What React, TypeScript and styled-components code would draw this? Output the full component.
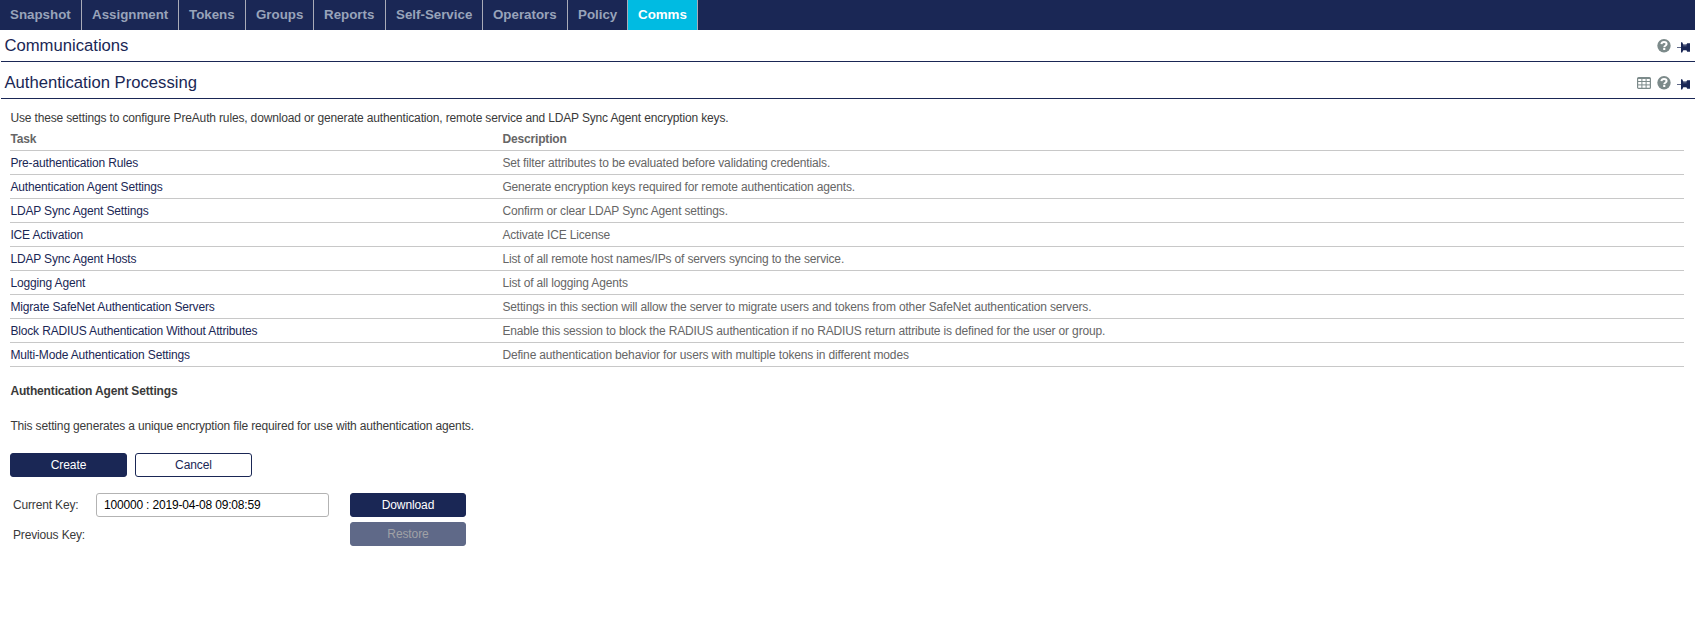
import React from "react";
import styled, { createGlobalStyle } from "styled-components";

const navy = "#1a2755";

const GlobalStyle = createGlobalStyle`
  * { box-sizing: border-box; }
  body {
    margin: 0;
    background: #fff;
    color: #3a3a3a;
    font: 12px/16px "Liberation Sans", Arial, sans-serif;
  }
`;

const NavBar = styled.nav`
  display: flex;
  height: 30px;
  background: ${navy};
`;

const Tab = styled.a<{ $width: number; $active?: boolean }>`
  flex: none;
  width: ${(p) => p.$width}px;
  padding-left: 10px;
  border-right: 1px solid #a9abb8;
  background: ${(p) => (p.$active ? "#00bbe2" : "transparent")};
  color: ${(p) => (p.$active ? "#fff" : "#98a3ba")};
  font-size: 13.33px;
  font-weight: bold;
  line-height: 29px;
  white-space: nowrap;
`;

const SectionHeader = styled.header<{ $height: number }>`
  display: flex;
  justify-content: space-between;
  align-items: flex-end;
  height: ${(p) => p.$height}px;
  margin-left: 1px;
  padding: 0 5px 4px 3.4px;
  border-bottom: 1px solid ${navy};
`;

const SectionTitle = styled.h1`
  margin: 0;
  color: ${navy};
  font-size: 16.67px;
  font-weight: normal;
  line-height: 22px;
`;

const Tools = styled.div`
  display: flex;
  align-items: center;
  gap: 6px;
  height: 22px;
  svg { display: block; }
`;

const Content = styled.main`
  padding: 11px 11px 0 10px;
  letter-spacing: -0.154px;
`;

const Intro = styled.p`
  margin: 0;
  padding-left: 0.4px;
  line-height: 16px;
`;

const Table = styled.div`
  display: flex;
  flex-direction: column;
  margin-top: 1px;
`;

const Row = styled.div<{ $head?: boolean }>`
  display: grid;
  grid-template-columns: 492px 1fr;
  height: 24px;
  padding-left: 0.4px;
  border-bottom: 1px solid #c8c8c8;
  color: #666;
  font-weight: ${(p) => (p.$head ? "bold" : "normal")};
  line-height: 24px;
`;

const TaskLink = styled.a`
  color: ${navy};
`;

const SubTitle = styled.h2`
  margin: 16px 0 0;
  padding-left: 0.4px;
  font-size: 12px;
  line-height: 16px;
`;

const Note = styled.p`
  margin: 19px 0 0;
  padding-left: 0.4px;
`;

const Actions = styled.div`
  display: flex;
  gap: 8px;
  margin-top: 19px;
`;

const Button = styled.button<{ $variant?: "outline" | "disabled" }>`
  width: 117px;
  height: 24px;
  padding: 0;
  border: 1px solid ${(p) => (p.$variant === "disabled" ? "#5f6988" : navy)};
  border-radius: 3px;
  background: ${(p) =>
    p.$variant === "outline" ? "#fff" : p.$variant === "disabled" ? "#5f6988" : navy};
  color: ${(p) =>
    p.$variant === "outline" ? navy : p.$variant === "disabled" ? "#a0a1a6" : "#fff"};
  font: 12px/22px "Liberation Sans", Arial, sans-serif;
  letter-spacing: -0.1px;
`;

const Keys = styled.div`
  display: grid;
  grid-template-columns: 83px 233px 137px;
  row-gap: 5px;
  padding-left: 3px;
  margin-top: 16px;
  line-height: 24px;
`;

const KeyInput = styled.input`
  width: 233px;
  height: 24px;
  padding: 0 7px;
  border: 1px solid #b3b3b3;
  border-radius: 3px;
  background: #fff;
  color: #000;
  font: 12px "Liberation Sans", Arial, sans-serif;
  letter-spacing: -0.18px;
`;

const KeyButton = styled(Button)`
  width: 116px;
  margin-left: 21px;
`;

const PreviousLabel = styled.span`
  grid-column: 1 / 3;
  padding-top: 1px;
`;

const HelpIcon = () => (
  <svg width="14" height="14" viewBox="0 0 14 14">
    <circle cx="7" cy="6.8" r="6.7" fill="#7c8a8a" />
    <path d="M4.4 5.2C4.6 3.7 5.6 3 7 3c1.6 0 2.6.8 2.6 2.1 0 1.7-2.3 1.6-2.3 3.1" fill="none" stroke="#fff" strokeWidth="2" />
    <path d="M6.2 9h2.1v2H6.2z" fill="#fff" />
  </svg>
);

const PinIcon = () => (
  <svg width="13" height="11" viewBox="0 0 13 11">
    <path d="M0 5h4v1H0z" fill="#5f6988" />
    <path d="M4 .2h1.2L6.3 2.5H9.4L10.2 1.2H13v8.5h-2.8L9.4 8.3H6.3L5.2 10.6H4z" fill={navy} />
    <path d="M6.2 3.8h3.4" stroke="#5f6988" />
  </svg>
);

const GridIcon = () => (
  <svg width="14" height="12" viewBox="0 0 14 12">
    <rect x=".6" y=".6" width="12.8" height="10.8" rx="1" fill="#fff" stroke="#7c8a8a" strokeWidth="1.2" />
    <path d="M1 1.5h12M1 4.5h12M1 7.9h12M4.9 1v10M9.1 1v10" stroke="#7c8a8a" />
  </svg>
);

const PinSlot = styled.span`
  padding-top: 3px;
`;

const tabs: [string, number][] = [
  ["Snapshot", 82], ["Assignment", 97], ["Tokens", 67], ["Groups", 68], ["Reports", 72],
  ["Self-Service", 97], ["Operators", 85], ["Policy", 60], ["Comms", 70],
];

const tasks = [
  ["Pre-authentication Rules", "Set filter attributes to be evaluated before validating credentials."],
  ["Authentication Agent Settings", "Generate encryption keys required for remote authentication agents."],
  ["LDAP Sync Agent Settings", "Confirm or clear LDAP Sync Agent settings."],
  ["ICE Activation", "Activate ICE License"],
  ["LDAP Sync Agent Hosts", "List of all remote host names/IPs of servers syncing to the service."],
  ["Logging Agent", "List of all logging Agents"],
  ["Migrate SafeNet Authentication Servers", "Settings in this section will allow the server to migrate users and tokens from other SafeNet authentication servers."],
  ["Block RADIUS Authentication Without Attributes", "Enable this session to block the RADIUS authentication if no RADIUS return attribute is defined for the user or group."],
  ["Multi-Mode Authentication Settings", "Define authentication behavior for users with multiple tokens in different modes"],
];

export default function App() {
  return (
    <>
      <GlobalStyle />
      <NavBar>
        {tabs.map(([label, width]) => (
          <Tab key={label} $width={width} $active={label === "Comms"}>{label}</Tab>
        ))}
      </NavBar>
      <SectionHeader $height={32}>
        <SectionTitle>Communications</SectionTitle>
        <Tools><HelpIcon /><PinSlot><PinIcon /></PinSlot></Tools>
      </SectionHeader>
      <SectionHeader $height={37}>
        <SectionTitle>Authentication Processing</SectionTitle>
        <Tools><GridIcon /><HelpIcon /><PinSlot><PinIcon /></PinSlot></Tools>
      </SectionHeader>
      <Content>
        <Intro>
          Use these settings to configure PreAuth rules, download or generate authentication, remote service and LDAP Sync Agent encryption keys.
        </Intro>
        <Table>
          <Row $head><span>Task</span><span>Description</span></Row>
          {tasks.map(([task, description]) => (
            <Row key={task}><TaskLink>{task}</TaskLink><span>{description}</span></Row>
          ))}
        </Table>
        <SubTitle>Authentication Agent Settings</SubTitle>
        <Note>This setting generates a unique encryption file required for use with authentication agents.</Note>
        <Actions>
          <Button>Create</Button>
          <Button $variant="outline">Cancel</Button>
        </Actions>
        <Keys>
          <span>Current Key:</span>
          <KeyInput readOnly value="100000 : 2019-04-08 09:08:59" />
          <KeyButton>Download</KeyButton>
          <PreviousLabel>Previous Key:</PreviousLabel>
          <KeyButton $variant="disabled" disabled>Restore</KeyButton>
        </Keys>
      </Content>
    </>
  );
}
